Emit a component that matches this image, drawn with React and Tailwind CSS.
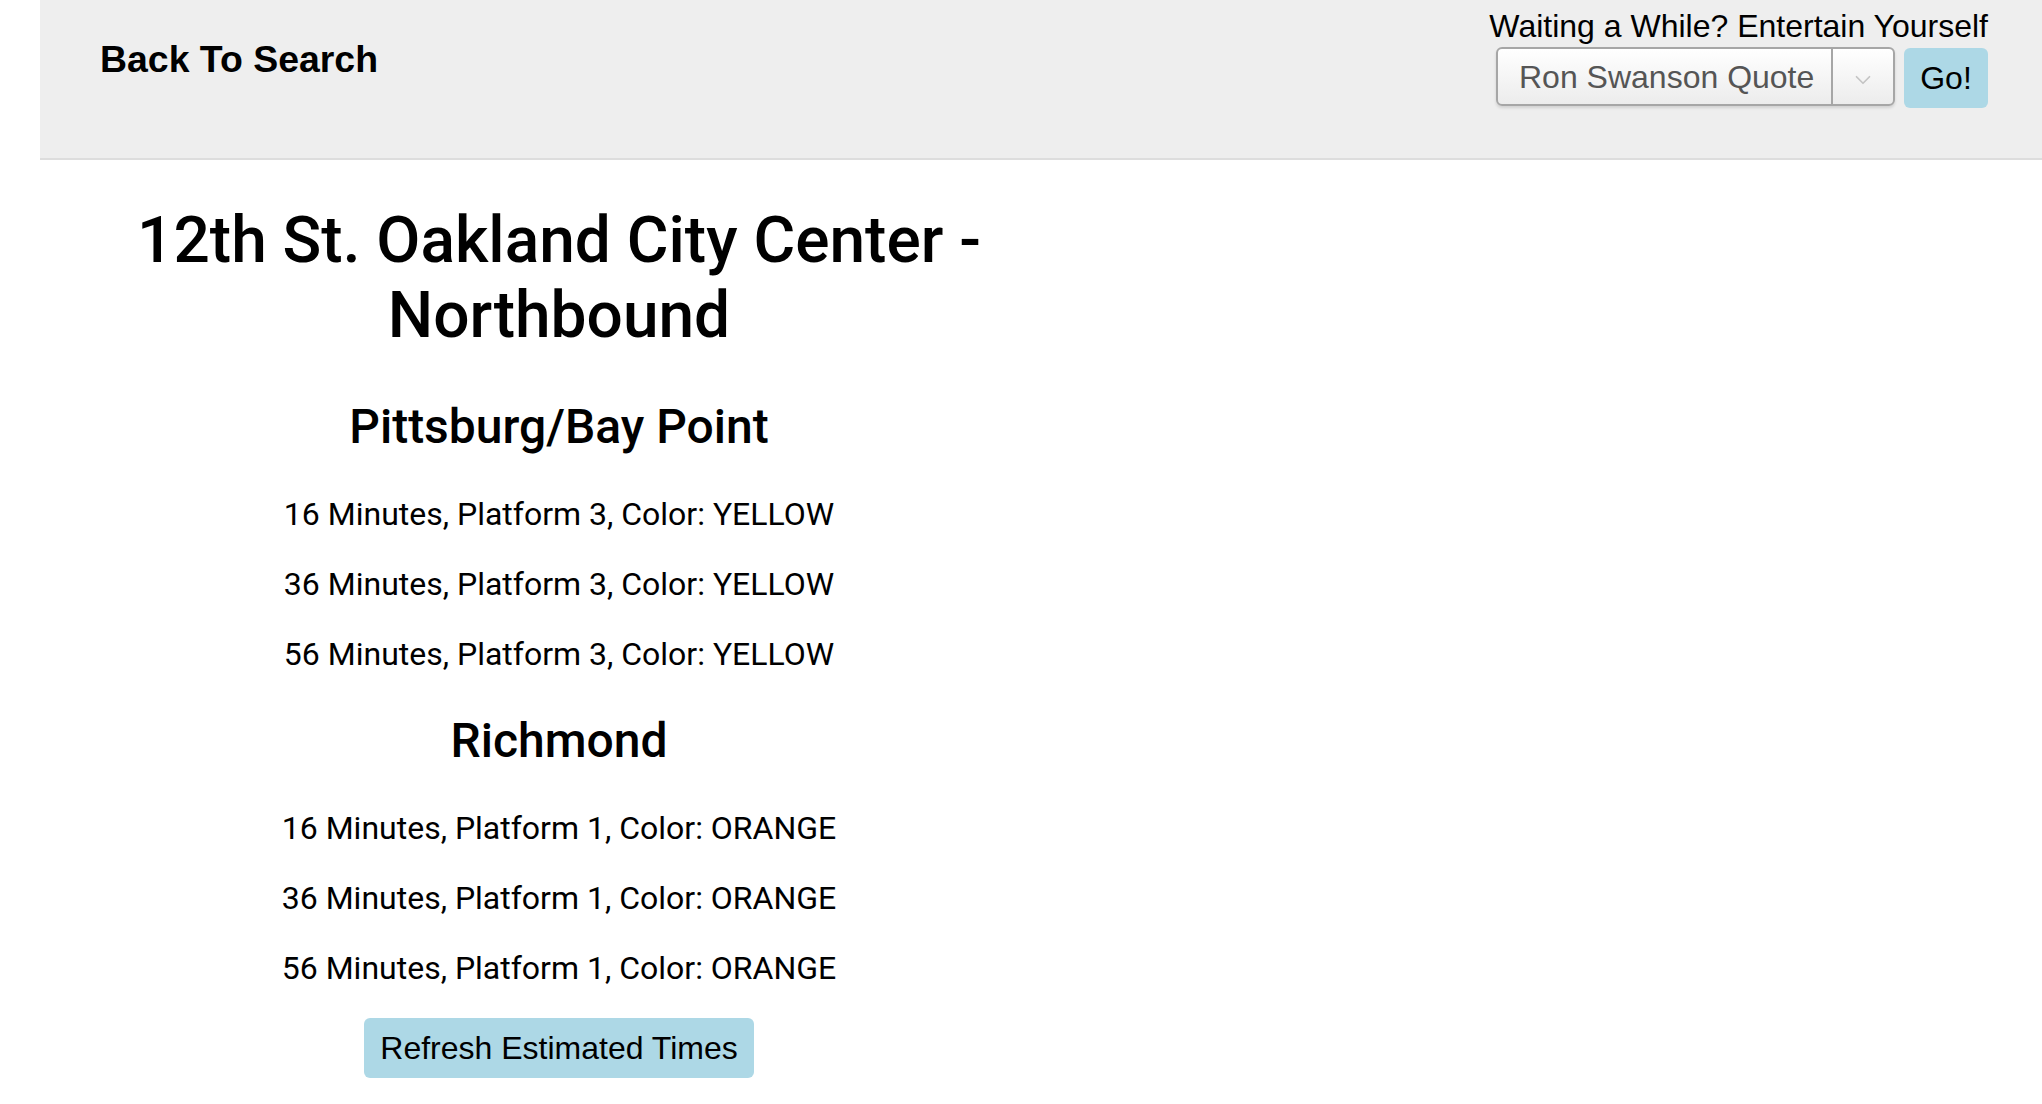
import { ChevronDown } from 'lucide-react'

const ROUTES = [
  {
    name: 'Pittsburg/Bay Point',
    trains: [
      { minutes: 16, platform: 3, color: 'YELLOW' },
      { minutes: 36, platform: 3, color: 'YELLOW' },
      { minutes: 56, platform: 3, color: 'YELLOW' },
    ],
  },
  {
    name: 'Richmond',
    trains: [
      { minutes: 16, platform: 1, color: 'ORANGE' },
      { minutes: 36, platform: 1, color: 'ORANGE' },
      { minutes: 56, platform: 1, color: 'ORANGE' },
    ],
  },
]

const helv = "font-['Helvetica','Liberation_Sans',Arial,sans-serif]"
const roboto = "font-['Roboto','Noto_Sans',sans-serif]"

function Header() {
  return (
    <div className={`flex justify-between h-[158px] bg-[#eee] border-b-2 border-[#ddd] box-content ${helv}`}>
      <h3 className="pl-[60px] pt-[38px] text-[37.44px] font-bold leading-[43px] text-black">
        Back To Search
      </h3>
      <div className="flex flex-col items-end pr-[54px] pt-[8px]">
        <div className="text-[32px] leading-[37px] text-black">Waiting a While? Entertain Yourself</div>
        <div className="flex items-start gap-[9px] mt-[2px]">
          <div className="flex h-[59px] w-[399px] rounded-[6px] border-2 border-[#a6a6a6] bg-gradient-to-b from-white to-[#ececec] shadow-[0_2px_3px_rgba(0,0,0,0.12)]">
            <span className="flex-1 flex items-center pl-[21px] text-[32px] text-[#555]">Ron Swanson Quote</span>
            <span className="flex w-[62px] items-center justify-center border-l-2 border-[#a6a6a6] pt-[6px]">
              <ChevronDown size={26} strokeWidth={1.6} className="text-[#c4c4c4]" />
            </span>
          </div>
          <button
            type="button"
            className="h-[60px] w-[84px] mt-[1px] rounded-[6px] bg-[#add8e6] text-[32px] text-black"
          >
            Go!
          </button>
        </div>
      </div>
    </div>
  )
}

export default function App() {
  return (
    <div className="ml-[40px] min-h-screen bg-white">
      <Header />
      <div className={`w-[1038px] text-center text-black ${roboto}`}>
        <h1 className="mt-[43px] mb-[46px] px-[88px] text-[64px] font-medium leading-[75px]">
          12th St. Oakland City Center - Northbound
        </h1>
        {ROUTES.map(route => (
          <div key={route.name}>
            <h2 className="my-[40px] text-[48px] font-medium leading-[56px]">{route.name}</h2>
            {route.trains.map(t => (
              <p key={t.minutes} className="my-[32px] text-[32px] leading-[38px]">
                {t.minutes} Minutes, Platform {t.platform}, Color: {t.color}
              </p>
            ))}
          </div>
        ))}
        <button
          type="button"
          className={`-mt-[1px] h-[60px] w-[390px] rounded-[6px] bg-[#add8e6] text-[32px] text-black ${helv}`}
        >
          Refresh Estimated Times
        </button>
      </div>
    </div>
  )
}
